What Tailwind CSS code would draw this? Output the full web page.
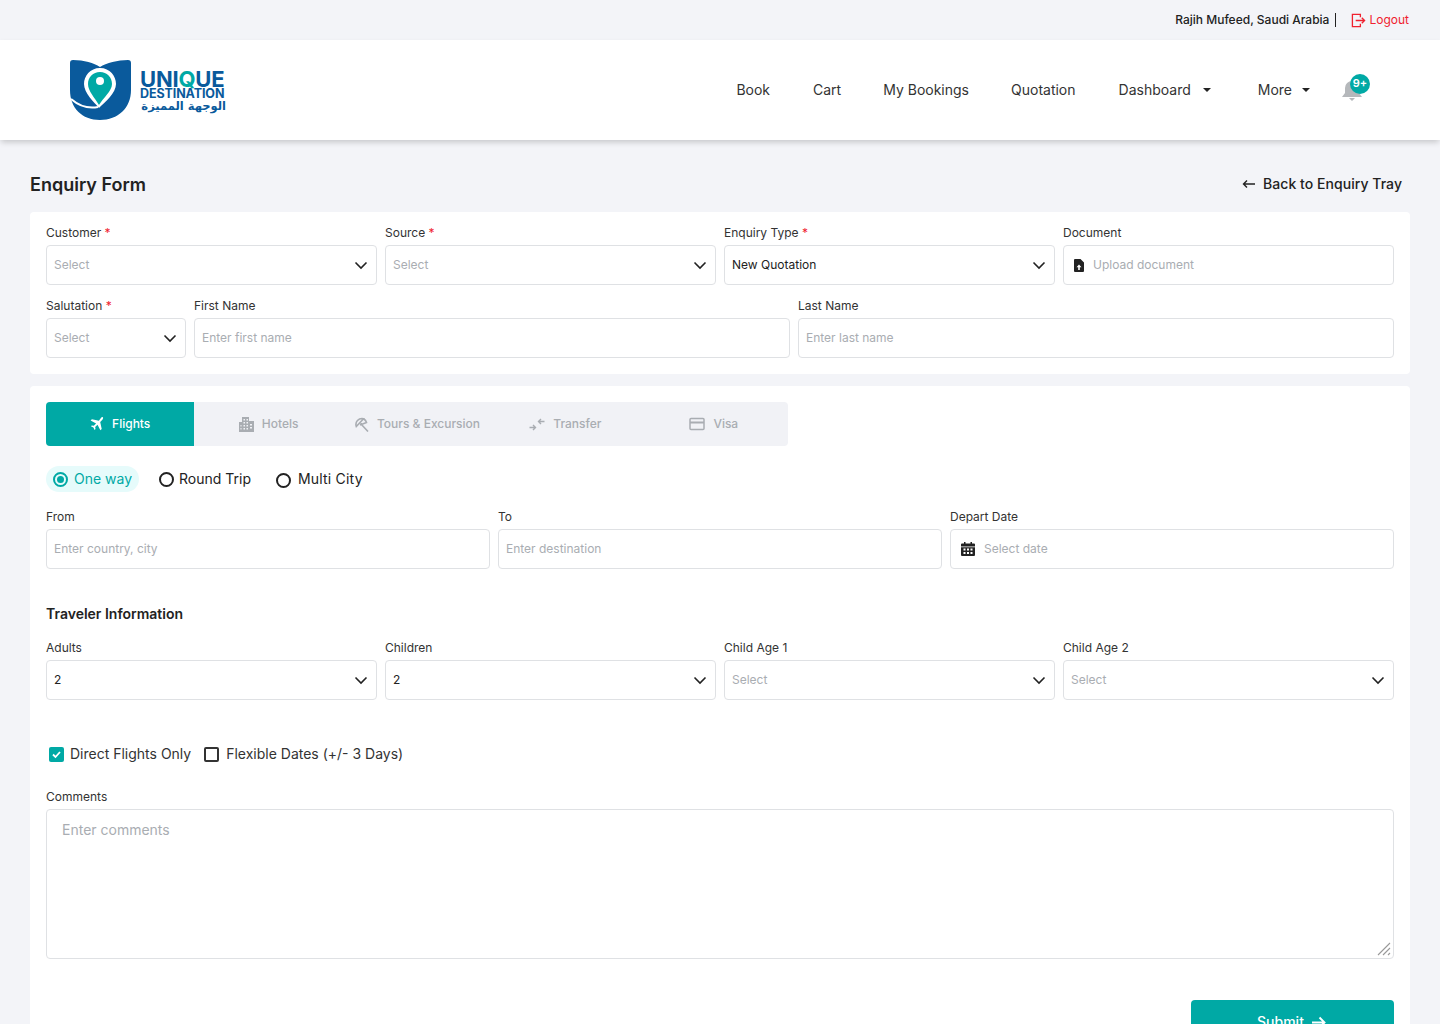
<!DOCTYPE html>
<html lang="en">
  <head>
    <meta charset="UTF-8" />
    <title>Enquiry Form</title>
    <script src="https://cdn.jsdelivr.net/npm/@tailwindcss/browser@4"></script>
  </head>
  <body class="h-screen overflow-hidden bg-[#f3f4f8] font-['Inter',sans-serif] text-[#222]">
    <!-- top bar -->
    <div class="flex h-10 items-center justify-end pr-[31px] text-xs">
      <span class="font-medium text-[#222]">Rajih Mufeed, Saudi Arabia</span>
      <span class="ml-[6px] h-[14px] w-px bg-[#222]"></span>
      <svg class="ml-[15px] size-[15px]" viewBox="0 0 16 16" fill="none" stroke="#f0212f" stroke-width="1.4"><path d="M10 4.5V1.5H1.5v13H10V11.5M5 8h9.5M11.5 5l3 3-3 3" /></svg>
      <span class="ml-[3px] text-[#f0212f]">Logout</span>
    </div>

    <!-- header -->
    <header class="flex h-[100px] items-center justify-between bg-white pr-[76px] pl-[70px] shadow-[0_3px_6px_-1px_rgba(0,0,0,0.2)]">
      <div class="flex items-center">
        <svg class="h-[61px] w-[61px]" viewBox="0 0 61 61">
          <path fill="#0a5a9c" d="M3 0C14 0 24 3 30 7 36 3 48 0 58 0 60 0 61 1 61 3V30C61 48 48 60 30 60 12 60 0 48 0 30V3C0 1 1 0 3 0Z" />
          <path fill="none" stroke="#fff" stroke-width="2" d="M1 39C8 45 18 49 28 47" />
          <path fill="#fff" d="M30 8C20 8 14 16 14 24 14 33 24 42 29 48 35 42 46 33 46 24 46 16 40 8 30 8Z" />
          <path fill="#00a9a5" d="M30 12C23 12 18 17 18 24 18 31 25 38 29 45 33 38 42 31 42 24 42 17 37 12 30 12Z" />
          <circle cx="30" cy="21" r="4" fill="#fff" />
        </svg>
        <div class="ml-[9px] flex w-[86px] flex-col font-bold text-[#0a5a9c]">
          <span class="h-[19px] text-[22px] leading-[20px] tracking-[-0.2px]">UNI<span class="text-[#00a9a5]">Q</span>UE</span>
          <span class="h-[12px] text-[12.5px] leading-[12px] tracking-[-0.1px]">DESTINATION</span>
          <span class="text-right font-['DejaVu_Sans',sans-serif] text-[11.5px] leading-[12px] font-bold whitespace-nowrap text-[#0a5a9c]" dir="rtl">الوجهة المميزة</span>
        </div>
      </div>
      <nav class="flex items-center text-sm text-[#333]">
        <a>Book</a>
        <a class="ml-[43px]">Cart</a>
        <a class="ml-[42px]">My Bookings</a>
        <a class="ml-[42px]">Quotation</a>
        <a class="ml-[43px]">Dashboard</a>
        <svg class="ml-[12px] size-2" viewBox="0 0 8 8" fill="#222"><path d="M0 2h8L4 6z" /></svg>
        <a class="ml-[47px]">More</a>
        <svg class="ml-[10px] size-2" viewBox="0 0 8 8" fill="#222"><path d="M0 2h8L4 6z" /></svg>
        <div class="relative ml-[30px] size-[24px]">
          <svg class="size-[24px]" viewBox="0 0 24 24" fill="#b5b8bb"><path d="M12 3a7 7 0 0 0-7 7v5l-3 4h20l-3-4v-5a7 7 0 0 0-7-7ZM9 20h6l-3 3z" /></svg>
          <span class="absolute -top-[4px] left-[10px] flex size-[20px] items-center justify-center rounded-full bg-[#00a9a5] text-[11px] font-semibold text-white">9+</span>
        </div>
      </nav>
    </header>

    <main class="px-[30px] pt-[31px]">
      <div class="flex h-[27px] items-center justify-between pr-2 pb-[2px]">
        <h1 class="mt-[2px] text-lg font-semibold text-[#222]">Enquiry Form</h1>
        <a class="flex items-center text-sm font-medium tracking-[0.05px] text-[#222]">
          <svg class="mr-[7px] size-[14px]" viewBox="0 0 14 14" fill="none" stroke="#222" stroke-width="1.4"><path d="M13 7H1.5M5 3.5 1.5 7 5 10.5" /></svg>
          Back to Enquiry Tray
        </a>
      </div>

      <!-- enquiry details -->
      <section class="mt-[14px] flex flex-col gap-[14px] rounded bg-white p-4 pt-3.5">
        <div class="grid grid-cols-4 gap-2">
          <div>
            <label class="block h-[19px] text-xs leading-[14px] text-[#333]">Customer <span class="text-[#f0212f]">*</span></label>
            <div class="flex h-10 items-center justify-between rounded border border-[#dfe1e4] pr-2 pl-[7px] text-xs text-[#a9adb2]">Select
              <svg class="size-[14px]" viewBox="0 0 14 14" fill="none" stroke="#222" stroke-width="1.6"><path d="M1.5 4.5 7 10l5.5-5.5" /></svg>
            </div>
          </div>
          <div>
            <label class="block h-[19px] text-xs leading-[14px] text-[#333]">Source <span class="text-[#f0212f]">*</span></label>
            <div class="flex h-10 items-center justify-between rounded border border-[#dfe1e4] pr-2 pl-[7px] text-xs text-[#a9adb2]">Select
              <svg class="size-[14px]" viewBox="0 0 14 14" fill="none" stroke="#222" stroke-width="1.6"><path d="M1.5 4.5 7 10l5.5-5.5" /></svg>
            </div>
          </div>
          <div>
            <label class="block h-[19px] text-xs leading-[14px] text-[#333]">Enquiry Type <span class="text-[#f0212f]">*</span></label>
            <div class="flex h-10 items-center justify-between rounded border border-[#dfe1e4] pr-2 pl-[7px] text-xs text-[#222]">New Quotation
              <svg class="size-[14px]" viewBox="0 0 14 14" fill="none" stroke="#222" stroke-width="1.6"><path d="M1.5 4.5 7 10l5.5-5.5" /></svg>
            </div>
          </div>
          <div>
            <label class="block h-[19px] text-xs leading-[14px] text-[#333]">Document</label>
            <div class="flex h-10 items-center rounded border border-[#dfe1e4] pl-[10px] text-xs text-[#a9adb2]">
              <svg class="mr-[9px] h-[13px] w-[10px]" viewBox="0 0 10 13"><path fill="#222" fill-rule="evenodd" d="M1 0h5.5L10 3.5V12a1 1 0 0 1-1 1H1a1 1 0 0 1-1-1V1a1 1 0 0 1 1-1ZM5 5.5 2.500 8.200h1.700V11h1.600V8.200h1.700z" /></svg>
              Upload document
            </div>
          </div>
        </div>
        <div class="grid grid-cols-[140px_1fr_1fr] gap-2">
          <div>
            <label class="block h-[19px] text-xs leading-[14px] text-[#333]">Salutation <span class="text-[#f0212f]">*</span></label>
            <div class="flex h-10 items-center justify-between rounded border border-[#dfe1e4] pr-2 pl-[7px] text-xs text-[#a9adb2]">Select
              <svg class="size-[14px]" viewBox="0 0 14 14" fill="none" stroke="#222" stroke-width="1.6"><path d="M1.5 4.5 7 10l5.5-5.5" /></svg>
            </div>
          </div>
          <div>
            <label class="block h-[19px] text-xs leading-[14px] text-[#333]">First Name</label>
            <div class="flex h-10 items-center rounded border border-[#dfe1e4] pl-[7px] text-xs text-[#a9adb2]">Enter first name</div>
          </div>
          <div>
            <label class="block h-[19px] text-xs leading-[14px] text-[#333]">Last Name</label>
            <div class="flex h-10 items-center rounded border border-[#dfe1e4] pl-[7px] text-xs text-[#a9adb2]">Enter last name</div>
          </div>
        </div>
      </section>

      <!-- booking details -->
      <section class="mt-3 rounded bg-white p-4">
        <div class="grid h-11 w-[742px] grid-cols-5 rounded bg-[#f1f2f6] text-xs font-medium text-[#a9adb2]">
          <div class="flex items-center justify-center rounded-l bg-[#00a9a5] text-white">
            <svg class="mr-2 size-[14px]" viewBox="0 0 14 14" fill="#fff"><path d="M12.8.3c.6.5.3 1.700-.4 2.400L10.200 5l1.500 7-1.300 1.300-2.900-5.500-2.300 2.300.3 2-.9.9-1.200-2.500-2.500-1.200.9-.9 2 .3 2.300-2.300L.6 3.600 1.900 2.300l7 1.500L11.100.7c.6-.6 1.100-.8 1.700-.4Z" /></svg>
            Flights
          </div>
          <div class="flex items-center justify-center">
            <svg class="mr-2 size-[15px]" viewBox="0 0 15 15" fill="#a9adb2"><path fill-rule="evenodd" d="M3 0h7v4h5v11H0V5h3zM4.500 2v1.500H6V2zM7.500 2v1.500H9V2zM4.500 5v1.500H6V5zM7.500 5v1.500H9V5zM4.500 8v1.500H6V8zM7.500 8v1.500H9V8zM11 7v1.500h2V7zM11 10v1.500h2V10zM1.500 8v1.500h1V8zM1.500 11v1.500h1V11zM4.500 11v1.500H6V11zM7.500 11v1.500H9V11z" /></svg>
            Hotels
          </div>
          <div class="flex items-center justify-center">
            <svg class="mr-2 size-[15px]" viewBox="0 0 15 15" fill="none" stroke="#a9adb2" stroke-width="1.6"><path d="M2.300 9.500C.8 5 4.500.8 9.500 1.700ZM9.500 1.700c1.700 1 2.600 2.200 3 3.800L6 8M6.500 6.500l7.500 8" /></svg>
            Tours &amp; Excursion
          </div>
          <div class="flex items-center justify-center">
            <svg class="mr-2 size-[16px]" viewBox="0 0 16 16" fill="none" stroke="#a9adb2" stroke-width="1.4"><path d="M.5 11.500H6M4 9l2.500 2.500L4 14M15.500 5.500H10M12 3 9.500 5.500 12 8" /></svg>
            Transfer
          </div>
          <div class="flex items-center justify-center">
            <svg class="mr-2 size-[16px]" viewBox="0 0 16 16" fill="none" stroke="#a9adb2" stroke-width="1.5"><rect x="1" y="2.500" width="14" height="11" rx="1" /><path d="M1 6.500h14" stroke-width="2" /></svg>
            Visa
          </div>
        </div>

        <div class="mt-5 flex h-[26px] items-center text-sm">
          <div class="flex h-[26px] w-[93px] items-center rounded-full bg-[#e6fbfb] pl-[7px] text-[#00a9a5]">
            <span class="flex size-[15px] items-center justify-center rounded-full border-2 border-[#00a9a5]"><span class="size-[7px] rounded-full bg-[#00a9a5]"></span></span>
            <span class="ml-[6px]">One way</span>
          </div>
          <span class="ml-[20px] size-[15px] rounded-full border-2 border-[#222]"></span>
          <span class="ml-[5px]">Round Trip</span>
          <span class="mt-[2px] ml-[25px] size-[15px] rounded-full border-2 border-[#222]"></span>
          <span class="ml-[7px] tracking-[0.2px]">Multi City</span>
        </div>

        <div class="mt-[18px] grid grid-cols-3 gap-2">
          <div>
            <label class="block h-[19px] text-xs leading-[14px] text-[#333]">From</label>
            <div class="flex h-10 items-center rounded border border-[#dfe1e4] pl-[7px] text-xs text-[#a9adb2]">Enter country, city</div>
          </div>
          <div>
            <label class="block h-[19px] text-xs leading-[14px] text-[#333]">To</label>
            <div class="flex h-10 items-center rounded border border-[#dfe1e4] pl-[7px] text-xs text-[#a9adb2]">Enter destination</div>
          </div>
          <div>
            <label class="block h-[19px] text-xs leading-[14px] text-[#333]">Depart Date</label>
            <div class="flex h-10 items-center rounded border border-[#dfe1e4] pl-[10px] text-xs text-[#a9adb2]">
              <svg class="mr-[9px] size-[14px]" viewBox="0 0 14 14">
                <path fill="#222" d="M3 0h1.5v1.5h5V0H11v1.500h2a1 1 0 0 1 1 1V13a1 1 0 0 1-1 1H1a1 1 0 0 1-1-1V2.500a1 1 0 0 1 1-1h2z" />
                <path fill="#fff" d="M0 4.500h14v.7H0zM2.500 6.500h2v2h-2zM6 6.500h2v2H6zM9.500 6.500h2v2h-2zM2.500 10h2v2h-2zM6 10h2v2H6zM9.500 10h2v2h-2z" />
              </svg>
              Select date
            </div>
          </div>
        </div>

        <h2 class="mt-[36px] text-sm leading-[18px] font-semibold text-[#222]">Traveler Information</h2>

        <div class="mt-[18px] grid grid-cols-4 gap-2">
          <div>
            <label class="block h-[19px] text-xs leading-[14px] text-[#333]">Adults</label>
            <div class="flex h-10 items-center justify-between rounded border border-[#dfe1e4] pr-2 pl-[7px] text-xs text-[#222]">2
              <svg class="size-[14px]" viewBox="0 0 14 14" fill="none" stroke="#222" stroke-width="1.6"><path d="M1.5 4.5 7 10l5.5-5.5" /></svg>
            </div>
          </div>
          <div>
            <label class="block h-[19px] text-xs leading-[14px] text-[#333]">Children</label>
            <div class="flex h-10 items-center justify-between rounded border border-[#dfe1e4] pr-2 pl-[7px] text-xs text-[#222]">2
              <svg class="size-[14px]" viewBox="0 0 14 14" fill="none" stroke="#222" stroke-width="1.6"><path d="M1.5 4.5 7 10l5.5-5.5" /></svg>
            </div>
          </div>
          <div>
            <label class="block h-[19px] text-xs leading-[14px] text-[#333]">Child Age 1</label>
            <div class="flex h-10 items-center justify-between rounded border border-[#dfe1e4] pr-2 pl-[7px] text-xs text-[#a9adb2]">Select
              <svg class="size-[14px]" viewBox="0 0 14 14" fill="none" stroke="#222" stroke-width="1.6"><path d="M1.5 4.5 7 10l5.5-5.5" /></svg>
            </div>
          </div>
          <div>
            <label class="block h-[19px] text-xs leading-[14px] text-[#333]">Child Age 2</label>
            <div class="flex h-10 items-center justify-between rounded border border-[#dfe1e4] pr-2 pl-[7px] text-xs text-[#a9adb2]">Select
              <svg class="size-[14px]" viewBox="0 0 14 14" fill="none" stroke="#222" stroke-width="1.6"><path d="M1.5 4.5 7 10l5.5-5.5" /></svg>
            </div>
          </div>
        </div>

        <div class="mt-[44px] flex h-5 items-center pl-[3px] text-sm text-[#333]">
          <span class="flex size-[15px] items-center justify-center rounded-[2px] bg-[#00a9a5]">
            <svg class="size-[11px]" viewBox="0 0 11 11" fill="none" stroke="#fff" stroke-width="1.8"><path d="M2 5.500 4.500 8 9 3" /></svg>
          </span>
          <span class="ml-[6px]">Direct Flights Only</span>
          <span class="ml-[13px] size-[15px] rounded-[2px] border-2 border-[#333]"></span>
          <span class="ml-[7px]">Flexible Dates (+/- 3 Days)</span>
        </div>

        <label class="mt-[26px] block h-[19px] text-xs leading-[14px] text-[#333]">Comments</label>
        <div class="relative h-[150px] rounded border border-[#dfe1e4] px-[15px] py-[10px] text-sm text-[#a9adb2]">
          Enter comments
          <svg class="absolute right-[2px] bottom-[2px] size-[14px]" viewBox="0 0 14 14" stroke="#999" stroke-width="1.1"><path d="M1 13 13 1M6 13l7-7M11 13l2-2" /></svg>
        </div>

        <div class="mt-[41px] flex justify-end">
          <button class="flex h-11 w-[203px] items-center justify-center gap-[7px] rounded bg-[#00a9a5] pr-[2px] text-sm font-medium text-white">
            Submit
            <svg class="size-[15px]" viewBox="0 0 15 15" fill="none" stroke="#fff" stroke-width="1.9"><path d="M1 7.500h12.500M8.500 2.500l5 5-5 5" /></svg>
          </button>
        </div>
      </section>
    </main>
  </body>
</html>
